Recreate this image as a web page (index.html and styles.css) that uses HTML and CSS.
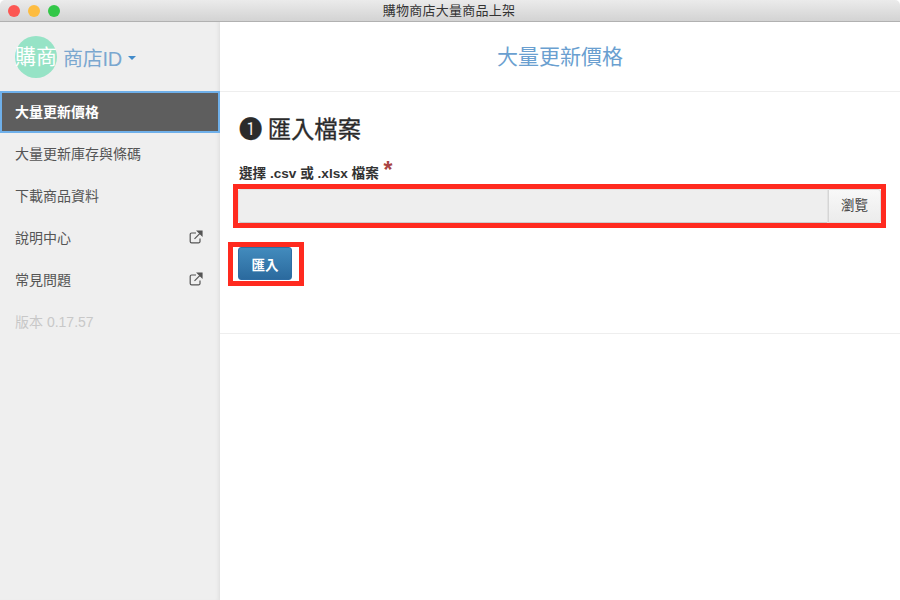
FILE: index.html
```html
<!DOCTYPE html>
<html lang="zh-Hant">
<head>
<meta charset="utf-8">
<title>購物商店大量商品上架</title>
<link rel="stylesheet" href="styles.css">
</head>
<body>
<div class="window">
  <header class="titlebar">
    <div class="lights"><span class="light red"></span><span class="light yellow"></span><span class="light green"></span></div>
    <div class="title">購物商店大量商品上架</div>
  </header>
  <div class="body">
    <aside class="sidebar">
      <div class="brand">
        <div class="avatar">購商</div>
        <div class="shop">商店ID</div>
        <span class="caret"></span>
      </div>
      <nav class="menu">
        <a class="item active">大量更新價格</a>
        <a class="item">大量更新庫存與條碼</a>
        <a class="item">下載商品資料</a>
        <a class="item">說明中心<svg class="ext" viewBox="0 0 14 14" width="14" height="14"><path d="M7 3H2.600A1.400 1.400 0 0 0 1.200 4.400v7a1.400 1.400 0 0 0 1.400 1.400h7a1.400 1.400 0 0 0 1.400-1.400V8.500" fill="none" stroke="#555" stroke-width="1.200"/><path d="M5.500 8.800 12 2.300M8.500 1h4.500v4.500z" fill="#555" stroke="#555" stroke-width="1.200"/></svg></a>
        <a class="item">常見問題<svg class="ext" viewBox="0 0 14 14" width="14" height="14"><path d="M7 3H2.600A1.400 1.400 0 0 0 1.200 4.400v7a1.400 1.400 0 0 0 1.400 1.400h7a1.400 1.400 0 0 0 1.400-1.400V8.500" fill="none" stroke="#555" stroke-width="1.200"/><path d="M5.500 8.800 12 2.300M8.500 1h4.500v4.500z" fill="#555" stroke="#555" stroke-width="1.200"/></svg></a>
        <a class="item version">版本 0.17.57</a>
      </nav>
    </aside>
    <main class="main">
      <div class="page-head">大量更新價格</div>
      <section class="panel">
        <h2 class="step">❶ 匯入檔案</h2>
        <label class="label">選擇 .csv 或 .xlsx 檔案 <span class="req">*</span></label>
        <div class="mark field-mark">
          <div class="file">
            <div class="file-input"></div>
            <div class="browse">瀏覽</div>
          </div>
        </div>
        <div class="mark btn-mark">
          <button class="btn">匯入</button>
        </div>
      </section>
    </main>
  </div>
</div>
</body>
</html>
```
FILE: styles.css
```css
* { box-sizing: border-box; }
html, body { margin: 0; height: 100%; background: #fff; }
body { font-family: "Liberation Sans", "Noto Sans CJK TC", sans-serif; color: #333; overflow: hidden; }
.window { width: 900px; height: 600px; display: flex; flex-direction: column; }
.titlebar {
  height: 22px; flex: none; display: flex; align-items: center; justify-content: center;
  position: relative;
  background: linear-gradient(#ebebeb, #d3d3d3);
  border-bottom: 1px solid #b1b1b1;
  border-radius: 5px 5px 0 0;
}
.lights { position: absolute; left: 8px; top: 5px; display: flex; gap: 8px; }
.light { width: 12px; height: 12px; border-radius: 50%; }
.red { background: #fc5753; }
.yellow { background: #fdbc40; }
.green { background: #33c748; }
.title { font-size: 13px; letter-spacing: 0.25px; color: #333; line-height: 22px; margin-right: 2px; }
.body { flex: 1; display: flex; min-height: 0; }
.sidebar {
  width: 220px; flex: none; background: #efefef;
  box-shadow: inset -4px 0 4px -3px #dcdcdc;
}
.brand { height: 69px; display: flex; align-items: center; padding-left: 15px; }
.avatar {
  width: 42px; height: 42px; border-radius: 50%; background: #96e3c6; color: #fff;
  font-size: 21px; line-height: 42px; text-align: center; white-space: nowrap; flex: none;
}
.shop { font-size: 20px; color: #7aa7cf; margin: 2px 0 0 6px; letter-spacing: -0.3px; }
.caret {
  width: 0; height: 0; margin-left: 6px; margin-top: 3px;
  border-left: 4px solid transparent; border-right: 4px solid transparent; border-top: 4px solid #428bca;
}
.menu { display: flex; flex-direction: column; }
.item {
  height: 42px; display: flex; align-items: center; justify-content: space-between;
  padding: 0 17px 2px 15px; font-size: 14px; color: #555;
}
.item.active {
  position: relative; background: #5e5e5e; color: #fff; font-weight: bold;
  border: 2px solid #6fb0ea; padding-left: 13px;
}
.item.version { color: #c8c8c8; }
.ext { flex: none; }
.main { flex: 1; min-width: 0; }
.page-head {
  height: 70px; border-bottom: 1px solid #eee; text-align: center;
  font-size: 21px; line-height: 69px; color: #6a9fd0;
}
.panel { height: 242px; border-bottom: 1px solid #eee; padding: 21px 14px 0; }
.step { margin: 0 0 0 5px; font-size: 23.300px; line-height: 34px; font-weight: 400; word-spacing: -1px; color: #2b2b2b; -webkit-text-stroke: 0.3px #2b2b2b; }
.label { display: block; margin: 17px 0 0 5px; height: 20px; font-size: 13.600px; line-height: 20px; font-weight: bold; color: #333; }
.req { color: #a94442; font-size: 23px; line-height: 10px; margin-left: 1px; }
.mark { border: 5px solid #ff2a1f; }
.field-mark { width: 653px; height: 44px; margin-left: -1px; }
.file { display: flex; height: 34px; }
.file-input { flex: 1; background: #eee; border: 1px solid #e2e2e2; border-bottom-color: #ccc; border-radius: 3px 0 0 3px; }
.browse {
  width: 53px; background: linear-gradient(#f8f8f8, #ececec); border: 1px solid #ddd; border-left-color: #d5d5d5;
  border-radius: 0 3px 3px 0; text-align: center; font-size: 13.500px; line-height: 32px; color: #444;
}
.btn-mark { width: 76px; height: 44px; margin: 14px 0 0 -6px; padding: 0 0 0 5px; }
.btn {
  display: block; width: 54px; height: 33px; padding: 0; font: bold 13.500px "Liberation Sans", "Noto Sans CJK TC", sans-serif;
  color: #fff; background: linear-gradient(#428bbd, #2b6a9e); border: 1px solid #2e6da4; border-radius: 3px;
}
```
